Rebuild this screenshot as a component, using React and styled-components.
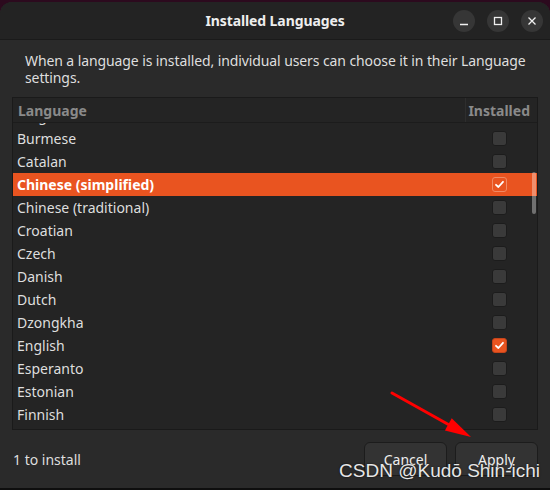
import styled, { createGlobalStyle } from 'styled-components';

const GlobalStyle = createGlobalStyle`
  html, body {
    margin: 0;
    padding: 0;
    background: #2c0a1e;
  }
  body {
    font-family: 'Noto Sans', 'Open Sans', sans-serif;
    font-size: 14px;
    color: #dedede;
  }
`;

const languages = [
  { name: 'Bulgarian' },
  { name: 'Burmese' },
  { name: 'Catalan' },
  { name: 'Chinese (simplified)', installed: true, selected: true },
  { name: 'Chinese (traditional)' },
  { name: 'Croatian' },
  { name: 'Czech' },
  { name: 'Danish' },
  { name: 'Dutch' },
  { name: 'Dzongkha' },
  { name: 'English', installed: true },
  { name: 'Esperanto' },
  { name: 'Estonian' },
  { name: 'Finnish' },
  { name: 'French' },
];

const Page = styled.div`
  position: relative;
  width: 550px;
  height: 490px;
  padding-top: 2px;
  box-sizing: border-box;
  overflow: hidden;
`;

const Window = styled.div`
  height: 488px;
  box-sizing: border-box;
  display: flex;
  flex-direction: column;
  background: #2a2a2a;
  border-radius: 12px 12px 0 0;
  border-bottom: 2px solid #0e0e0e;
  overflow: hidden;
`;

const HeaderBar = styled.div`
  height: 37px;
  flex: none;
  display: grid;
  grid-template-columns: 1fr auto 1fr;
  align-items: center;
  background: #232323;
  border-bottom: 1px solid #1a1a1a;
`;

const Title = styled.div`
  grid-column: 2;
  font-weight: 700;
  font-size: 14px;
  letter-spacing: -0.1px;
  color: #eeeeee;
`;

const Controls = styled.div`
  grid-column: 3;
  justify-self: end;
  display: flex;
  gap: 12px;
  padding-right: 7px;
`;

const CtrlButton = styled.div`
  width: 22px;
  height: 22px;
  border-radius: 50%;
  background: #363636;
  display: flex;
  align-items: center;
  justify-content: center;
`;

const Content = styled.div`
  flex: 1;
  display: flex;
  flex-direction: column;
  padding: 12px 12px 0;
`;

const Description = styled.p`
  margin: 0 0 11px;
  padding: 0 0 0 13px;
  line-height: 17px;
  font-size: 14px;
  letter-spacing: -0.1px;
  color: #dedede;
`;

const Tree = styled.div`
  height: 333px;
  box-sizing: border-box;
  border: 1px solid #1a1a1a;
  background: #242424;
  display: flex;
  flex-direction: column;
  overflow: hidden;
`;

const HeadRow = styled.div`
  height: 24px;
  flex: none;
  display: flex;
  border-bottom: 1px solid #1c1c1c;
`;

const HeadCell = styled.div`
  display: flex;
  align-items: center;
  font-weight: 700;
  font-size: 14px;
  color: #8a8a8a;
  ${(p) =>
    p.$check
      ? `width: 72px; justify-content: flex-end; padding-right: 7px; box-sizing: border-box; border-left: 1px solid #2e2e2e;`
      : `flex: 1; padding-left: 5px;`}
`;

const ListBody = styled.div`
  position: relative;
  flex: 1;
  overflow: hidden;
`;

const ScrollContent = styled.div`
  margin-top: -19px;
`;

const Row = styled.div`
  height: 23px;
  display: flex;
  align-items: center;
  background: ${(p) => (p.$selected ? '#e95420' : 'transparent')};
`;

const Name = styled.div`
  flex: 1;
  padding-left: 4px;
  color: ${(p) => (p.$selected ? '#ffffff' : '#dedede')};
  font-weight: ${(p) => (p.$selected ? 700 : 400)};
`;

const CheckCell = styled.div`
  width: 72px;
  display: flex;
  justify-content: center;
  padding-right: 3px;
  box-sizing: border-box;
`;

const Checkbox = styled.div`
  width: 15px;
  height: 15px;
  box-sizing: border-box;
  border-radius: 3px;
  display: flex;
  align-items: center;
  justify-content: center;
  background: ${(p) => (p.$checked ? '#e95420' : '#3a3a3a')};
  border: 1px solid
    ${(p) => (p.$checked ? (p.$selected ? '#f08a64' : '#c6441a') : '#1c1c1c')};
`;

const Scrollbar = styled.div`
  position: absolute;
  right: 1px;
  top: 49px;
  width: 4px;
  height: 42px;
  border-radius: 2px;
  background: rgba(255, 255, 255, 0.35);
`;

const Footer = styled.div`
  display: flex;
  align-items: center;
  justify-content: space-between;
  padding: 12px 0 10px 1px;
`;

const Status = styled.span`
  font-size: 14px;
  color: #dedede;
`;

const ButtonGroup = styled.div`
  display: flex;
  gap: 8px;
`;

const Button = styled.button`
  width: 83px;
  height: 34px;
  border-radius: 6px;
  border: 1px solid #1c1c1c;
  background: #333333;
  color: #eeeeee;
  font-family: inherit;
  font-size: 14px;
`;

const Watermark = styled.div`
  position: absolute;
  right: 10px;
  bottom: 8px;
  font-family: 'Liberation Sans', Arial, sans-serif;
  font-size: 19px;
  color: #e6e6e6;
  text-shadow: 0 0 2px rgba(0, 0, 0, 0.8);
  pointer-events: none;
`;

const Arrow = styled.svg`
  position: absolute;
  left: 0;
  top: 0;
  pointer-events: none;
`;

const CheckMark = () => (
  <svg width="11" height="11" viewBox="0 0 11 11">
    <path
      d="M2 5.8 L4.4 8 L9 2.8"
      fill="none"
      stroke="#ffffff"
      strokeWidth="1.8"
      strokeLinecap="round"
      strokeLinejoin="round"
    />
  </svg>
);

const App = () => {
  return (
    <Page>
      <GlobalStyle />
      <Window>
        <HeaderBar>
          <Title>Installed Languages</Title>
          <Controls>
            <CtrlButton>
              <svg width="10" height="10" viewBox="0 0 10 10">
                <path d="M1 8.5 H9" stroke="#f0f0f0" strokeWidth="1.3" />
              </svg>
            </CtrlButton>
            <CtrlButton>
              <svg width="10" height="10" viewBox="0 0 10 10">
                <rect x="1.5" y="1.5" width="7" height="7" fill="none" stroke="#f0f0f0" strokeWidth="1.3" />
              </svg>
            </CtrlButton>
            <CtrlButton>
              <svg width="10" height="10" viewBox="0 0 10 10">
                <path d="M1.5 1.5 L8.5 8.5 M8.5 1.5 L1.5 8.5" stroke="#f0f0f0" strokeWidth="1.3" />
              </svg>
            </CtrlButton>
          </Controls>
        </HeaderBar>
        <Content>
          <Description>
            When a language is installed, individual users can choose it in their Language
            settings.
          </Description>
          <Tree>
            <HeadRow>
              <HeadCell>Language</HeadCell>
              <HeadCell $check>Installed</HeadCell>
            </HeadRow>
            <ListBody>
              <ScrollContent>
                {languages.map((lang) => (
                  <Row key={lang.name} $selected={lang.selected}>
                    <Name $selected={lang.selected}>{lang.name}</Name>
                    <CheckCell>
                      <Checkbox $checked={lang.installed} $selected={lang.selected}>
                        {lang.installed && <CheckMark />}
                      </Checkbox>
                    </CheckCell>
                  </Row>
                ))}
              </ScrollContent>
              <Scrollbar />
            </ListBody>
          </Tree>
          <Footer>
            <Status>1 to install</Status>
            <ButtonGroup>
              <Button>Cancel</Button>
              <Button>Apply</Button>
            </ButtonGroup>
          </Footer>
        </Content>
      </Window>
      <Arrow width="550" height="490" viewBox="0 0 550 490">
        <line x1="392" y1="393" x2="452" y2="426.5" stroke="#ff0000" strokeWidth="3" strokeLinecap="round" />
        <polygon points="471,437 444.9,430.4 451.7,418.2" fill="#ff0000" />
      </Arrow>
      <Watermark>CSDN @Kudō Shin-ichi</Watermark>
    </Page>
  );
};

export default App;
